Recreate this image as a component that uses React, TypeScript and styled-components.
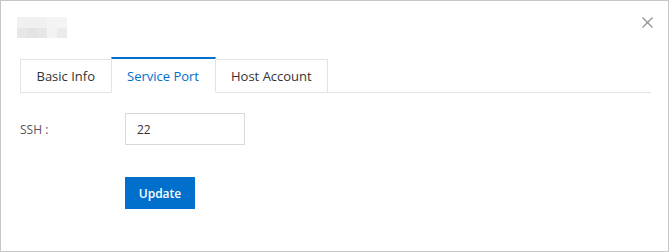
import styled, { createGlobalStyle } from 'styled-components'

const GlobalStyle = createGlobalStyle`
  html, body {
    margin: 0;
    padding: 0;
    background: #ffffff;
  }
  body {
    font-family: 'Open Sans', 'Liberation Sans', sans-serif;
  }
`

const tabs = ['Basic Info', 'Service Port', 'Host Account']

// blurred title placeholder, drawn as pixel blocks
const titleRows = [
  ['#f0f0f0', '#f0f0f0', '#f0f0f0', '#f4f4f4', '#f4f4f4'],
  ['#e7e7e7', '#e3e3e3', '#e6e6e6', '#f3f3f3', '#ebebeb'],
]

const App = () => {
  return (
    <>
      <GlobalStyle />
      <Dialog>
        <Header>
          <TitleBlur width="50" height="21" viewBox="0 0 50 21">
            {titleRows.map((row, r) =>
              row.map((c, i) => <rect key={`${r}-${i}`} x={i * 10} y={r * 11} width="10" height={r ? 10 : 11} fill={c} />)
            )}
          </TitleBlur>
          <CloseButton type="button" aria-label="close">
            <svg width="11" height="11" viewBox="0 0 11 11">
              <path d="M0.5 0.5 L10.5 10.5 M10.5 0.5 L0.5 10.5" stroke="#8c8c8c" strokeWidth="1.1" fill="none" />
            </svg>
          </CloseButton>
        </Header>
        <TabBar>
          {tabs.map((t) => (
            <Tab key={t} $active={t === 'Service Port'}>
              {t}
            </Tab>
          ))}
        </TabBar>
        <Form>
          <Row>
            <Label>SSH :</Label>
            <Input type="text" defaultValue="22" />
          </Row>
          <Row>
            <Label />
            <Button type="button">Update</Button>
          </Row>
        </Form>
      </Dialog>
    </>
  )
}

const Dialog = styled.div`
  width: 669px;
  height: 252px;
  box-sizing: border-box;
  border: 1px solid #c6c6c6;
  background: #fff;
  display: flex;
  flex-direction: column;
`

const Header = styled.div`
  height: 54px;
  padding: 16px 15px 0 16px;
  box-sizing: border-box;
  display: flex;
  justify-content: space-between;
  align-items: flex-start;
`

const TitleBlur = styled.svg`
  display: block;
`

const CloseButton = styled.button`
  border: none;
  background: transparent;
  padding: 0;
  width: 11px;
  height: 11px;
  cursor: pointer;
  display: flex;

  svg {
    display: block;
  }
`

const TabBar = styled.div`
  margin: 0 17px 0 19px;
  height: 37px;
  display: flex;
  align-items: flex-end;
  border-bottom: 1px solid #e3e3e3;
`

const Tab = styled.div<{ $active?: boolean }>`
  height: ${(p) => (p.$active ? '36px' : '34px')};
  box-sizing: border-box;
  padding: 0 15.5px;
  margin-bottom: -1px;
  margin-left: -1px;
  display: flex;
  align-items: center;
  font-size: 13px;
  color: ${(p) => (p.$active ? '#0070cc' : '#333')};
  background: #fff;
  border: 1px solid #e3e3e3;
  border-top: ${(p) => (p.$active ? '2px solid #0070cc' : '1px solid #e3e3e3')};
  border-bottom: ${(p) => (p.$active ? '1px solid #fff' : '1px solid #e3e3e3')};
  position: relative;
  z-index: ${(p) => (p.$active ? 1 : 0)};
  cursor: pointer;

  &:first-child {
    margin-left: 0;
  }
`

const Form = styled.div`
  padding: 20px 0 0 19px;
  display: flex;
  flex-direction: column;
  gap: 32px;
`

const Row = styled.div`
  display: flex;
  align-items: center;
`

const Label = styled.div`
  width: 105px;
  font-size: 12px;
  color: #555;
`

const Input = styled.input`
  width: 120px;
  height: 32px;
  box-sizing: border-box;
  border: 1px solid #d9d9d9;
  padding: 0 11px;
  font-family: inherit;
  font-size: 12px;
  color: #333;
  outline: none;
`

const Button = styled.button`
  width: 70px;
  height: 32px;
  border: none;
  background: #0070cc;
  color: #fff;
  font-family: inherit;
  font-size: 12px;
  font-weight: 600;
  cursor: pointer;
  padding: 0;
`

export default App
